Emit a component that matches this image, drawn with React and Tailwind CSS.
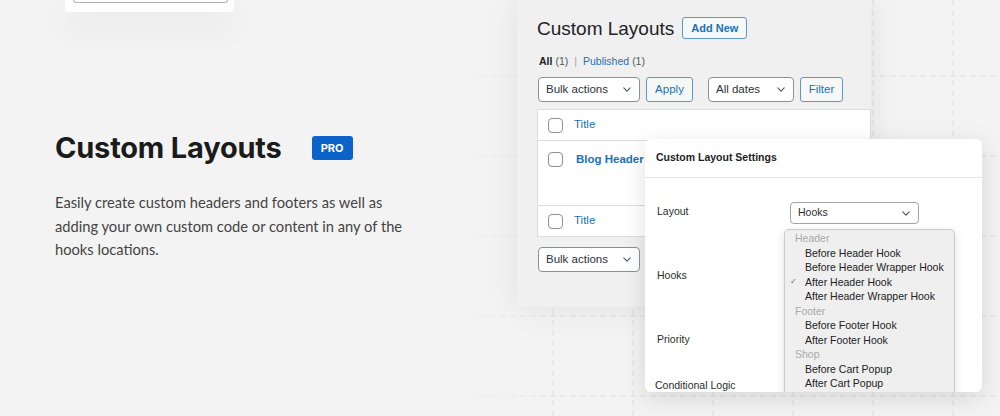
import React from 'react';

const hookGroups = [
  { group: 'Header', items: ['Before Header Hook', 'Before Header Wrapper Hook', 'After Header Hook', 'After Header Wrapper Hook'] },
  { group: 'Footer', items: ['Before Footer Hook', 'After Footer Hook'] },
  { group: 'Shop', items: ['Before Cart Popup', 'After Cart Popup'] },
];

const gridX = [553, 633, 713, 793, 873, 953];
const gridY = [76, 156, 236, 316, 396];

function Chevron({ className }) {
  return (
    <svg viewBox="0 0 10 6" className={className} fill="none" stroke="currentColor" strokeWidth="1.4" strokeLinecap="round" strokeLinejoin="round">
      <path d="M1 1l4 4 4-4" />
    </svg>
  );
}

// dashed backdrop grid, fading out to the left
function Grid() {
  return (
    <svg className="absolute inset-0" width="1000" height="416" viewBox="0 0 1000 416">
      <defs>
        <linearGradient id="fade" gradientUnits="userSpaceOnUse" x1="450" y1="0" x2="580" y2="0">
          <stop offset="0" stopColor="#dedede" stopOpacity="0" />
          <stop offset="1" stopColor="#dedede" stopOpacity="1" />
        </linearGradient>
      </defs>
      {gridY.map(y => (
        <line key={y} x1="450" y1={y} x2="1000" y2={y} stroke="url(#fade)" strokeWidth="1" strokeDasharray="6 4" />
      ))}
      {gridX.map(x => (
        <line key={x} x1={x} y1="0" x2={x} y2="416" stroke="#dedede" strokeWidth="1" strokeDasharray="6 4" />
      ))}
    </svg>
  );
}

function Select({ label, className }) {
  return (
    <div className={`h-[25px] flex items-center justify-between pl-[7px] pr-[8px] bg-white border border-[#8c8f94] rounded-[4px] text-[11.5px] text-[#2c3338] ${className}`}>
      <span>{label}</span>
      <Chevron className="w-[8px] h-[5px] text-[#50575e]" />
    </div>
  );
}

function WpButton({ label, className }) {
  return (
    <div className={`h-[25px] flex items-center justify-center bg-[#f6f7f7] border border-[#5f97c6] rounded-[3px] text-[11.5px] text-[#2271b1] ${className}`}>
      {label}
    </div>
  );
}

function Checkbox() {
  return <div className="ml-[10px] w-[15px] h-[15px] shrink-0 bg-white border border-[#8c8f94] rounded-[4px]" />;
}

export default function App() {
  return (
    <div className="relative w-[1000px] h-[416px] overflow-hidden bg-[#f3f3f3] flex">
      <Grid />

      {/* tail of the card from the section above */}
      <div className="absolute left-[65px] top-0 w-[169px] h-[12px] bg-white rounded-b-[4px] shadow-[0_14px_30px_rgba(0,0,0,0.07)]">
        <div className="absolute left-[8px] top-0 w-[155px] h-[3px] border-x border-b border-[#b3b3b3] rounded-b-[3px]" />
      </div>

      {/* Left copy */}
      <div className="relative w-[517px] shrink-0 pl-[55px] pt-[129px]">
        <div className="flex items-center font-['Inter',sans-serif]">
          <h1 className="text-[29px] leading-[38px] font-bold text-[#1b1b1b] tracking-[-0.2px]">Custom Layouts</h1>
          <span className="ml-[30px] w-[41px] h-[24px] flex items-center justify-center bg-[#0b63c9] rounded-[3px] text-white text-[11px] font-bold">PRO</span>
        </div>
        <p className="mt-[24px] w-[362px] font-['Lato',sans-serif] text-[14.7px] leading-[23.5px] text-[#444]">
          Easily create custom headers and footers as well as adding your own custom code or content in any of the hooks locations.
        </p>
      </div>

      {/* WP admin list screen */}
      <div className="relative w-[354px] h-[307px] shrink-0 bg-[#f0f0f1] shadow-[0_0_30px_rgba(0,0,0,0.08)] pl-[20px] pt-[14px] font-['Liberation_Sans',Arial,sans-serif]">
        <div className="flex items-center h-[28px]">
          <h2 className="text-[19px] leading-none text-[#1d2327]">Custom Layouts</h2>
          <div className="ml-[8px] h-[22px] px-[8px] flex items-center bg-[#f6f7f7] border border-[#5f97c6] rounded-[3px] text-[11px] font-bold text-[#2271b1]">Add New</div>
        </div>
        <div className="mt-[13px] h-[14px] flex items-center text-[10.5px] text-[#50575e] pl-[2px]">
          <span className="font-bold text-[#1d2327]">All</span>
          <span className="ml-[3px]">(1)</span>
          <span className="mx-[6px] text-[#a7aaad]">|</span>
          <span className="text-[#2271b1]">Published</span>
          <span className="ml-[3px]">(1)</span>
        </div>
        <div className="mt-[8px] flex items-center pl-[1px]">
          <Select label="Bulk actions" className="w-[102px]" />
          <WpButton label="Apply" className="ml-[6px] w-[47px]" />
          <Select label="All dates" className="ml-[15px] w-[86px]" />
          <WpButton label="Filter" className="ml-[6px] w-[43px]" />
        </div>
        <div className="mt-[7px] w-[334px] bg-white border border-[#dcdcde] text-[11.5px]">
          <div className="h-[31px] flex items-center border-b border-[#dcdcde]">
            <Checkbox />
            <span className="ml-[11px] text-[#2271b1]">Title</span>
          </div>
          <div className="h-[65px] pt-[11px] border-b border-[#dcdcde]">
            <div className="flex items-center h-[15px]">
              <Checkbox />
              <span className="ml-[13px] font-bold text-[#2271b1]">Blog Header</span>
            </div>
          </div>
          <div className="h-[30px] flex items-center">
            <Checkbox />
            <span className="ml-[11px] text-[#2271b1]">Title</span>
          </div>
        </div>
        <div className="mt-[10px] pl-[1px]">
          <Select label="Bulk actions" className="w-[102px]" />
        </div>
      </div>

      {/* Settings meta box laid over the list */}
      <div className="absolute left-[645px] top-[139px] w-[337px] h-[253px] overflow-hidden bg-white rounded-[6px] shadow-[0_6px_24px_rgba(0,0,0,0.12)] font-['Liberation_Sans',Arial,sans-serif] text-[10.5px] text-[#2c2c2c]">
        <div className="h-[39px] flex items-center pl-[11px] border-b border-[#e3e3e3] font-bold text-[#1e1e1e]">Custom Layout Settings</div>
        <div className="relative pl-[12px] pt-[24px]">
          <div className="h-[22px] flex items-center">
            <span className="w-[133px] -mt-[3px]">Layout</span>
            <div className="w-[129px] h-[22px] flex items-center justify-between pl-[7px] pr-[8px] border border-[#a3a3a3] rounded-[4px]">
              <span>Hooks</span>
              <Chevron className="w-[8px] h-[5px] text-[#555]" />
            </div>
          </div>
          <div className="mt-[41px] h-[22px] flex items-center">Hooks</div>
          <div className="mt-[42px] h-[22px] flex items-center">Priority</div>
          <div className="mt-[25px] h-[20px] flex items-center -ml-[2px]">Conditional Logic</div>

          {/* open hooks dropdown */}
          <div className="absolute left-[139px] top-[51px] w-[171px] h-[175px] pt-[1px] bg-[#efefef] border border-[#cbcbcb] rounded-[5px] shadow-[0_3px_10px_rgba(0,0,0,0.12)] leading-[14.5px]">
            {hookGroups.map(g => (
              <div key={g.group}>
                <div className="pl-[10px] text-[#a9a9a9]">{g.group}</div>
                {g.items.map(item => (
                  <div key={item} className="relative pl-[20px] text-[#222]">
                    {item === 'After Header Hook' && (
                      <span className="absolute left-[5px] top-0 text-[8px] text-[#666]">✓</span>
                    )}
                    {item}
                  </div>
                ))}
              </div>
            ))}
          </div>
        </div>
      </div>
    </div>
  );
}
